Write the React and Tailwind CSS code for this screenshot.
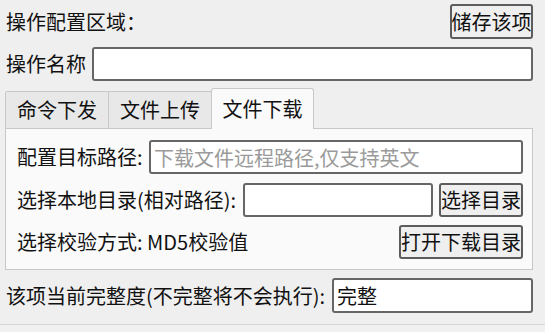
import { useState } from "react";

const font = { fontFamily: '"Noto Sans CJK SC", "Noto Sans", sans-serif' };

function Btn({ children, className = "" }) {
  return (
    <button
      className={`h-[34px] px-0 flex items-center justify-center whitespace-nowrap rounded-[3px] border-2 border-[#5c5c5c] bg-[#efefef] text-[20px] leading-none text-[#111] ${className}`}
    >
      {children}
    </button>
  );
}

function Field({ className = "", placeholder, value }) {
  return (
    <input
      readOnly
      value={value}
      placeholder={placeholder}
      className={`h-[34px] rounded-[3px] border-2 border-[#666] bg-white px-[3px] text-[20px] text-[#111] placeholder:text-[#9a9a9a] outline-none ${className}`}
    />
  );
}

export default function App() {
  const [tab, setTab] = useState(2);
  const tabs = ["命令下发", "文件上传", "文件下载"];

  return (
    <div style={font} className="w-[545px] h-[332px] bg-[#efefef] text-[#111] text-[20px] flex flex-col overflow-hidden">
      <div className="flex flex-col pt-[4px] pl-[5px] pr-[12px]">
        {/* header */}
        <div className="flex items-center h-[35px]">
          <span className="pl-[1px]">操作配置区域：</span>
          <Btn className="ml-auto h-[35px] w-[83px]">储存该项</Btn>
        </div>

        <div className="flex items-center mt-[8px]">
          <span className="pl-[1px]">操作名称</span>
          <Field className="ml-auto w-[441px]" />
        </div>

        {/* tabs */}
        <div className="flex items-end h-[40px] mt-[7px]">
          {tabs.map((t, i) => (
            <div
              key={t}
              onClick={() => setTab(i)}
              className={
                i === tab
                  ? "h-[41px] -mb-[1px] w-[103px] flex items-center justify-center bg-[#fafafa] border border-b-0 border-[#c8c8c8] rounded-t-[3px] relative z-10"
                  : "h-[37px] w-[104px] flex items-center justify-center bg-[#e8e8e8] border border-b-0 border-[#c8c8c8] rounded-t-[2px] -mr-[1px]"
              }
            >
              {t}
            </div>
          ))}
        </div>

        {/* pane */}
        <div className="h-[142px] border border-[#c8c8c8] bg-[#fafafa] pt-[11px] pl-[11px] pr-[9px] flex flex-col gap-[8px]">
          <div className="flex items-center h-[34px]">
            <span>配置目标路径:</span>
            <Field className="ml-auto w-[374px] h-[33px]" placeholder="下载文件远程路径,仅支持英文" />
          </div>
          <div className="flex items-center h-[34px] mt-[1px]">
            <span>选择本地目录(相对路径):</span>
            <Field className="ml-auto w-[190px]" />
            <Btn className="ml-[6px] w-[84px]">选择目录</Btn>
          </div>
          <div className="flex items-center h-[34px]">
            <span>选择校验方式: MD5校验值</span>
            <Btn className="ml-auto w-[124px]">打开下载目录</Btn>
          </div>
        </div>

        {/* completeness */}
        <div className="flex items-center mt-[8px]">
          <span className="pl-[1px]">该项当前完整度(不完整将不会执行):</span>
          <Field className="ml-auto w-[201px] h-[35px]" value="完整" />
        </div>
      </div>

      <div className="mt-[11px] flex-1 border-t border-[#d6d6d6] bg-[#f0f0f0]" />
    </div>
  );
}
